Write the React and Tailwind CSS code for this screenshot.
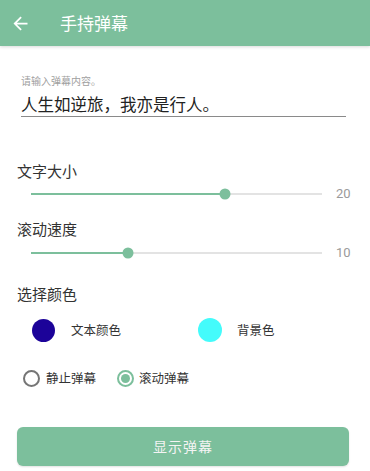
import React from "react";

const FONT = { fontFamily: '"Noto Sans CJK SC", Roboto, sans-serif' };

function Slider({ value, max }) {
  const pct = (value / max) * 100;
  return (
    <div className="flex items-center h-[20px] pl-[31px]">
      <div className="relative w-[291px] h-[2px] bg-[#e3e3e3]">
        <div className="absolute left-0 top-0 h-[2px] bg-[#7cbf9c]" style={{ width: pct + "%" }} />
        <div
          className="absolute top-1/2 w-[11px] h-[11px] rounded-full bg-[#7cbf9c] -translate-x-1/2 -translate-y-1/2"
          style={{ left: pct + "%" }}
        />
      </div>
      <span className="ml-[14px] text-[13px] leading-[20px] text-[#9a9a9a]" style={{ fontFamily: "Roboto, sans-serif" }}>
        {value}
      </span>
    </div>
  );
}

export default function App() {
  return (
    <div className="w-[370px] h-[471px] bg-white overflow-hidden" style={FONT}>
      <div className="h-[46px] bg-[#7cbf9c] flex items-center shadow-[0_1px_3px_rgba(0,0,0,0.15)]">
        <svg className="ml-[10px] w-[21px] h-[21px]" viewBox="0 0 24 24" fill="#ffffff">
          <path d="M20 11H7.83l5.59-5.59L12 4l-8 8 8 8 1.41-1.41L7.83 13H20v-2z" />
        </svg>
        <span className="ml-[29px] text-[17px] leading-[24px] text-white">手持弹幕</span>
      </div>

      <div className="ml-[21px] w-[325px] mt-[29px]">
        <div className="text-[10px] leading-[12px] text-[#a0a0a0]">请输入弹幕内容。</div>
        <div className="mt-[7px] text-[16.5px] leading-[20px] text-[#222222] pb-[2px] border-b border-[#8a8a8a]">
          人生如逆旅，我亦是行人。
        </div>
      </div>

      <div className="ml-[17px] mt-[44px] text-[15px] leading-[20px] text-[#333333]">文字大小</div>
      <div className="mt-[3px]">
        <Slider value={20} max={30} />
      </div>

      <div className="ml-[17px] mt-[15px] text-[15px] leading-[20px] text-[#333333]">滚动速度</div>
      <div className="mt-[4px]">
        <Slider value={10} max={30} />
      </div>

      <div className="ml-[17px] mt-[21px] text-[15px] leading-[20px] text-[#333333]">选择颜色</div>

      <div className="mt-[14px] flex items-center h-[24px] pl-[32px]">
        <div className="flex items-center w-[166px]">
          <div className="w-[23px] h-[23px] rounded-full bg-[#1c0399]" />
          <span className="ml-[16px] text-[12.5px] text-[#333333]">文本颜色</span>
        </div>
        <div className="flex items-center">
          <div className="w-[24px] h-[24px] rounded-full bg-[#44fbfb]" />
          <span className="ml-[15px] text-[12.5px] text-[#333333]">背景色</span>
        </div>
      </div>

      <div className="mt-[26px] flex items-center h-[20px] pl-[23px]">
        <div className="w-[17px] h-[17px] rounded-full border-2 border-[#757575]" />
        <span className="ml-[6px] text-[12.5px] text-[#333333]">静止弹幕</span>
        <div className="ml-[21px] w-[17px] h-[17px] rounded-full border-2 border-[#7cbf9c] flex items-center justify-center">
          <div className="w-[9px] h-[9px] rounded-full bg-[#7cbf9c]" />
        </div>
        <span className="ml-[5px] text-[12.5px] text-[#333333]">滚动弹幕</span>
      </div>

      <div className="mt-[39px] mx-[17px] w-[332px] h-[39px] rounded-[6px] bg-[#7cbf9c] flex items-center justify-center shadow-[0_1px_2px_rgba(0,0,0,0.12)]">
        <span className="text-[14px] text-[#f4f4f4] tracking-[1px]">显示弹幕</span>
      </div>
    </div>
  );
}
